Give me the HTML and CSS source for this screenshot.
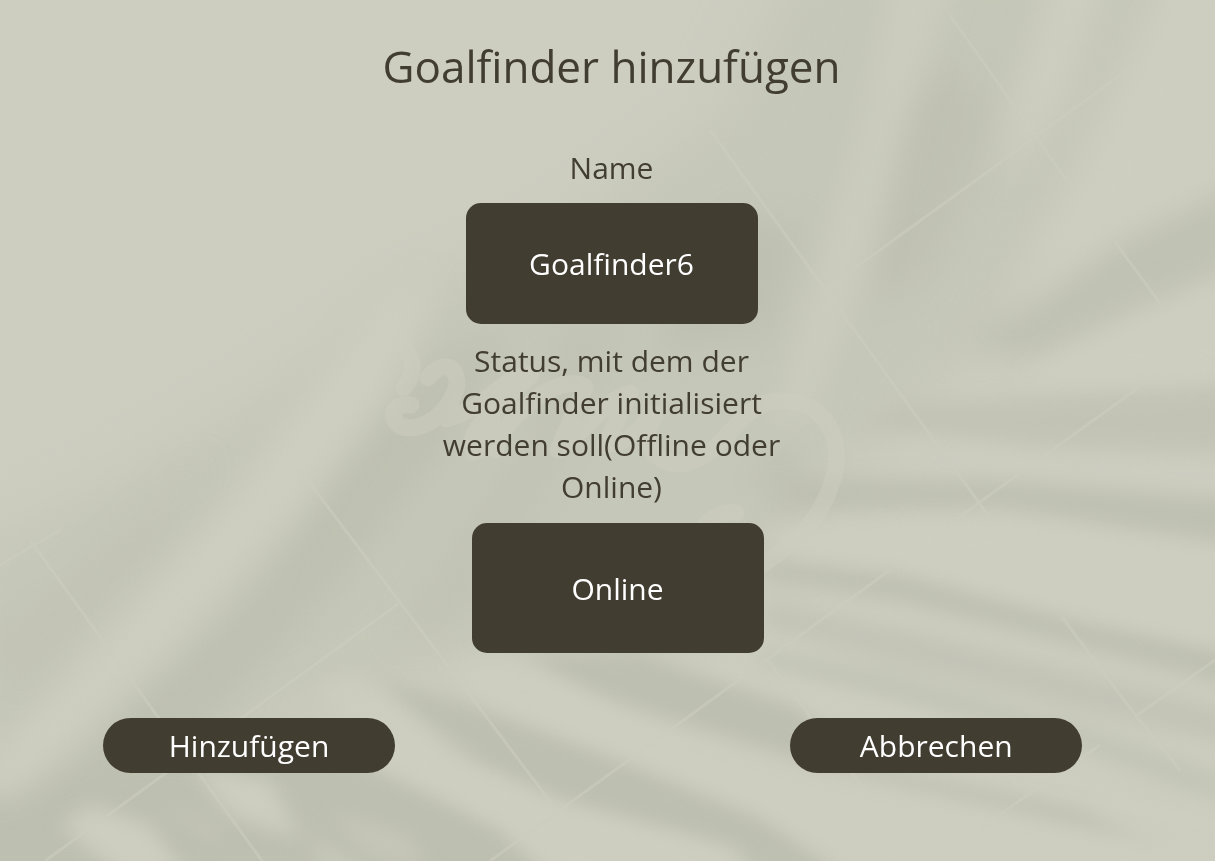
FILE: index.html
```html
<!DOCTYPE html>
<html lang="de">
<head>
<meta charset="utf-8">
<meta name="viewport" content="width=device-width, initial-scale=1">
<title>Goalfinder hinzufügen</title>
<link rel="stylesheet" href="styles.css">
</head>
<body>
<svg class="backdrop" viewBox="0 0 1215 861" preserveAspectRatio="xMidYMid slice" aria-hidden="true">
  <defs>
    <filter id="soft" x="-20%" y="-20%" width="140%" height="140%" color-interpolation-filters="sRGB"><feGaussianBlur stdDeviation="10"/></filter>
    <filter id="softer" x="-20%" y="-20%" width="140%" height="140%" color-interpolation-filters="sRGB"><feGaussianBlur stdDeviation="16"/></filter>
    <filter id="wide" x="-20%" y="-20%" width="140%" height="140%" color-interpolation-filters="sRGB"><feGaussianBlur stdDeviation="26"/></filter>
  </defs>
  <rect width="1215" height="861" fill="#cdcec0"/>
  <!-- broad leaf shade -->
  <g filter="url(#wide)" fill="#c5c7b8">
    <path d="M-60 560 L130 470 L270 390 L420 290 L560 230 L720 110 L800 -50 H1180 L1080 170 L1000 310 L940 390 L850 470 L770 560 L700 650 L500 650 L340 700 L180 760 L40 900 H-60Z"/>
  </g>
  <!-- upper blades -->
  <g filter="url(#softer)" fill="#bdbfb0">
    <path d="M50 800 L130 700 L250 600 L320 490 L420 370 L510 330 L450 440 L350 570 L250 680 L160 780Z" opacity=".85"/>
    <path d="M395 640 L440 570 L540 430 L560 330 L625 320 L550 470 L460 620Z" opacity=".55"/>
    <path d="M660 350 L770 330 L800 230 L740 220 L680 280Z" opacity=".9"/>
    <path d="M865 290 L895 110 L950 60 L990 110 L950 230 L910 290Z" opacity=".75"/>
    <path d="M-20 650 L100 550 L210 455 L140 560 L20 680Z" opacity=".4"/>
    <path d="M-40 800 L100 755 L300 740 L330 890 H-40Z"/>
    <path d="M1260 175 L1120 240 L960 345 L1030 360 L1130 312 L1260 255Z" opacity=".85"/>
  </g>
  <!-- lower blades -->
  <g filter="url(#soft)" fill="#bdbfb0">
    <path d="M900 405 L1240 385 V455 L1040 448 L860 425Z" opacity=".7"/>
    <path d="M780 478 L1000 480 L1240 500 V545 L1000 508 L800 510Z" opacity=".9"/>
    <path d="M765 560 L900 575 L1080 622 L1240 655 V688 L1060 642 L900 602 L765 580Z" opacity=".95"/>
    <path d="M765 600 L900 628 L1080 672 L1240 712 V748 L1060 705 L900 665 L765 628Z" opacity=".65"/>
    <path d="M765 650 L880 668 L1100 730 L1240 780 V808 L1060 750 L900 712 L750 672Z" opacity=".6"/>
    <path d="M520 655 L640 652 L790 698 L860 765 L1080 810 L1170 861 L1000 822 L850 800 L700 752 L600 705Z"/>
    <path d="M380 680 L480 706 L620 758 L760 815 L850 880 H780 L690 842 L550 800 L440 752Z"/>
    <path d="M260 740 L400 770 L500 825 L560 890 H390 L300 830Z"/>
    <path d="M750 480 L790 440 L810 500 L780 520Z" opacity=".55"/>
  </g>
  <!-- light between the upper blades -->
  <g filter="url(#softer)" fill="#cdcec0">
    <path d="M-30 780 L130 610 L230 500 L310 390 L390 290 L440 280 L390 390 L290 520 L160 660 L10 800Z"/>
    <path d="M895 -30 H955 L905 120 L865 270 L810 410 L770 440 L820 270 L865 110Z" opacity=".85"/>
    <path d="M1055 -30 H1110 L1060 110 L1000 190 L1010 110Z"/>
    <path d="M1185 -40 L1090 170 L1000 320 L1120 225 L1260 155 V-40Z"/>
  </g>
  <!-- light between the lower blades -->
  <g filter="url(#soft)" fill="#cdcec0">
    <path d="M1010 382 L1120 330 L1240 278 V372Z"/>
    <path d="M760 530 L1000 525 L1240 562 V645 L1080 607 L900 560 L790 550Z"/>
    <path d="M450 660 L520 665 L620 705 L800 760 L1040 816 L1240 860 V890 H900 L760 810 L600 745 L480 700Z" opacity=".95"/>
    <path d="M640 650 L740 663 L980 725 L1180 790 L1000 755 L790 700Z" opacity=".9"/>
    <path d="M350 710 L450 755 L560 805 L740 850 V890 H590 L500 825 L380 770Z" opacity=".9"/>
    <path d="M90 805 L150 825 L195 890 H140 L60 825Z M190 765 L270 780 L300 840 L230 815Z"/>
    <path d="M310 690 L350 675 L430 725 L480 760 L390 735Z" opacity=".7"/>
    <path d="M150 790 L220 830 L215 845Z M330 810 L410 835 L430 880 L360 850Z" opacity=".5"/>
  </g>
  <!-- tile joints -->
  <g class="joints">
    <path d="M30 540 L265 865 M300 470 L555 808 M710 130 L990 518 M950 15 L1070 185 M1115 242 L1162 306 M1062 617 L1136 716 L1180 770 M768 660 L870 797"/>
    <path d="M0 565 L60 530 M45 861 L398 604 M490 861 L890 570 M825 290 L1130 68 M955 520 L1145 383 M1136 716 L1215 660 M980 828 L1100 745"/>
  </g>
  <!-- cursive ornament -->
  <g class="script">
    <path d="M401 343 Q422 364 404 388"/>
    <path d="M411 405 C392 402 388 420 402 427 C425 432 450 412 457 385 C457 362 440 362 428 378"/>
    <path d="M446 419 C495 405 500 375 531 375 C506 400 462 430 474 452 C495 447 493 420 492 418 M496 450 C500 420 560 370 585 387 L558 450 C576 440 605 400 630 393 L605 445 C640 445 650 405 655 415 C640 440 650 462 680 464 C728 458 736 401 780 401 C820 400 840 430 836 466 C825 530 775 555 740 580"/>
    <path d="M706 524 Q722 510 736 513"/>
  </g>
</svg>
<main class="page">
  <h1 class="title">Goalfinder hinzufügen</h1>
  <form class="form">
    <div class="fields">
      <label class="label" for="name">Name</label>
      <input class="control control-name" id="name" type="text" value="Goalfinder6">
      <label class="label" for="status">Status, mit dem der Goalfinder initialisiert werden soll(Offline oder Online)</label>
      <select class="control control-status" id="status">
        <option selected>Online</option>
        <option>Offline</option>
      </select>
    </div>
    <div class="actions">
      <button class="button" type="submit">Hinzufügen</button>
      <button class="button" type="button">Abbrechen</button>
    </div>
  </form>
</main>
</body>
</html>
```
FILE: styles.css
```css
* {
  box-sizing: border-box;
}

body {
  margin: 0;
  min-height: 100vh;
  background: #cdcec0;
  color: #423d31;
  font-family: "Open Sans", "Noto Sans", sans-serif;
}

.backdrop {
  position: fixed;
  inset: 0;
  z-index: -1;
  width: 100%;
  height: 100%;
}

.joints {
  fill: none;
  stroke: #cccdbf;
  stroke-width: 3;
  opacity: 0.6;
}

.script {
  fill: none;
  stroke: #cdcec0;
  stroke-width: 17;
  stroke-linecap: round;
  stroke-linejoin: round;
  opacity: 0.5;
}

.page {
  padding: 36px 0 32px 8px;
}

.title {
  margin: 0;
  font-size: 44px;
  line-height: 60px;
  font-weight: 400;
  text-align: center;
}

.fields {
  display: flex;
  flex-direction: column;
  align-items: center;
  padding-top: 51px;
}

.label {
  max-width: 356px;
  font-size: 30px;
  line-height: 42px;
  font-weight: 400;
  text-align: center;
}

.control {
  width: 292px;
  border: 0;
  border-radius: 15px;
  background: #423d31;
  color: #fff;
  font-family: inherit;
  font-size: 30px;
  font-weight: 500;
  text-align: center;
  text-align-last: center;
  appearance: none;
}

.control-name {
  height: 121px;
  margin: 14px 0 16px;
}

.control-status {
  height: 130px;
  margin-top: 15px;
  margin-left: 12px;
}

.actions {
  display: flex;
  justify-content: space-between;
  padding: 65px 11% 0 95px;
}

.button {
  width: 292px;
  height: 55px;
  padding: 0;
  border: 0;
  border-radius: 28px;
  background: #423d31;
  color: #fff;
  font-family: inherit;
  font-size: 30px;
  font-weight: 500;
}
```
